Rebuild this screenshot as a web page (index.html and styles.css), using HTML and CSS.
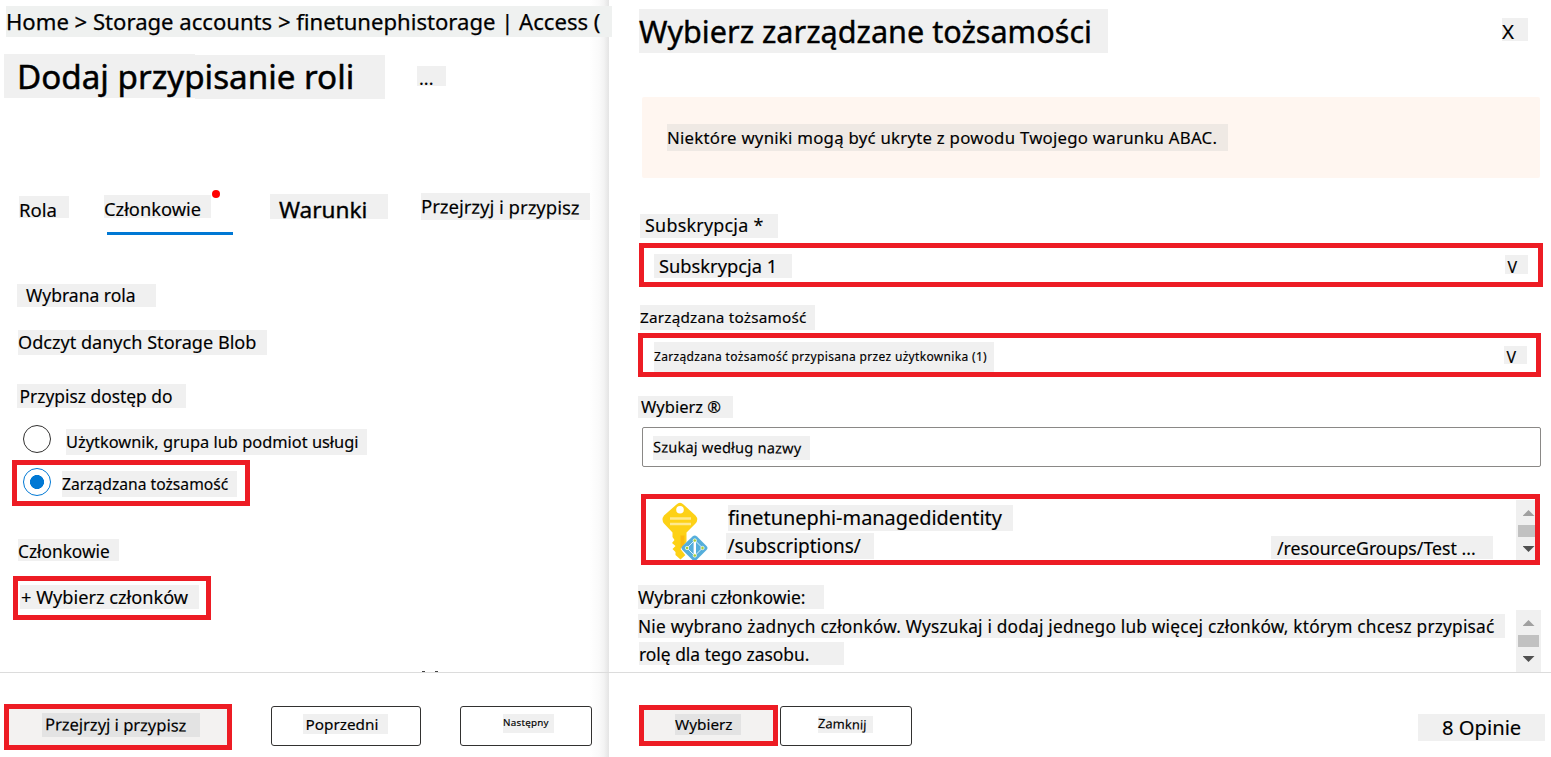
FILE: index.html
```html
<!DOCTYPE html>
<html lang="pl">
<head>
<meta charset="utf-8">
<title>Dodaj przypisanie roli</title>
<link rel="stylesheet" href="styles.css">
</head>
<body>
<div class="app">
  <section class="page">
    <div class="page-body">
      <nav class="chip breadcrumb">Home &gt; Storage accounts &gt; finetunephistorage | Access (</nav>
      <header class="title-row">
        <h1 class="chip title">Dodaj przypisanie roli</h1>
        <span class="chip more">...</span>
      </header>
      <div class="tabs">
        <span class="chip tab-role">Rola</span>
        <span class="chip tab-members">Członkowie<i class="alert-dot"></i><i class="tab-line"></i></span>
        <span class="chip tab-conditions">Warunki</span>
        <span class="chip tab-review"><span class="tilt">Przejrzyj i przypisz</span></span>
      </div>
      <div class="chip role-label">Wybrana rola</div>
      <div class="chip role-value">Odczyt danych Storage Blob</div>
      <div class="chip access-label">Przypisz dostęp do</div>
      <div class="radio-row">
        <span class="radio"></span>
        <span class="chip radio-user">Użytkownik, grupa lub podmiot usługi</span>
      </div>
      <div class="marked radio-marked">
        <span class="radio checked"></span>
        <span class="chip radio-identity">Zarządzana tożsamość</span>
      </div>
      <div class="chip members-label">Członkowie</div>
      <div class="marked add-members"><span class="chip add-text">+ Wybierz członków</span></div>
      <div class="cut-text"><i></i><i></i></div>
    </div>
    <footer class="page-footer">
      <div class="marked primary btn-review"><span class="chip dark review-text"><span class="tilt">Przejrzyj i przypisz</span></span></div>
      <div class="button btn-prev"><span class="chip prev-text">Poprzedni</span></div>
      <div class="button btn-next"><span class="chip next-text">Następny</span></div>
    </footer>
  </section>

  <section class="panel">
    <div class="panel-body">
      <header class="panel-head">
        <h2 class="chip panel-title">Wybierz zarządzane tożsamości</h2>
        <span class="chip close">X</span>
      </header>
      <div class="notice"><span class="chip notice-text">Niektóre wyniki mogą być ukryte z powodu Twojego warunku ABAC.</span></div>
      <div class="chip sub-label">Subskrypcja *</div>
      <div class="marked select sub-select"><span class="chip sub-value">Subskrypcja 1</span><span class="chip arrow">V</span></div>
      <div class="chip ident-label">Zarządzana tożsamość</div>
      <div class="marked select ident-select"><span class="chip ident-value">Zarządzana tożsamość przypisana przez użytkownika (1)</span><span class="chip arrow arrow-low">V</span></div>
      <div class="chip pick-label">Wybierz ®</div>
      <div class="search"><span class="chip search-text"><span class="tilt">Szukaj według nazwy</span></span></div>
      <div class="marked result">
        <svg class="key" width="50" height="61" viewBox="0 0 50 61">
          <path fill="#fdd116" d="M16.500 4.500Q20 1 23.500 4.500L35.500 15.500Q39 19.500 35.500 23.500L26.500 32.500V54L20.500 59.500L15.500 55V52L12.500 49L15.500 46L12 43L14.500 40L12.500 37V32.500L4 23.500Q1 19.500 4 15.500Z"/>
          <path fill="#fbb90f" d="M20.500 35.500H24.500V46L20.500 51Z"/>
          <circle cx="20" cy="9.800" r="3.800" fill="#fff"/>
          <path stroke="#ffe98f" stroke-width="2.600" d="M10 18.500h21M10 24h21"/>
          <path fill="#fff" d="M34.500 33L50 48V61H30L20.500 49Z"/>
          <path fill="#55aedb" d="M32.500 36.500Q34.800 34.500 37 36.500L46.500 46Q48.500 48 46.500 50L36 60.500H33L22.500 50Q20.500 48 22.500 46Z"/>
          <path fill="none" stroke="#d8f0fa" stroke-width="1" d="M34 41L27 48L34 55M35.500 41L42.500 48L35.500 55"/>
          <path stroke="#fff" stroke-width="2.400" d="M34.800 40V56"/>
          <g fill="#a8cf38" stroke="#fff" stroke-width=".7"><circle cx="34.800" cy="40.500" r="1.700"/><circle cx="27" cy="48" r="1.700"/><circle cx="42.500" cy="48" r="1.700"/><circle cx="34.800" cy="55.500" r="1.700"/></g>
        </svg>
        <div class="result-text">
          <div class="chip result-name">finetunephi-managedidentity</div>
          <div class="chip result-path">/subscriptions/</div>
        </div>
        <span class="chip result-group">/resourceGroups/Test ...</span>
        <div class="scrollbar result-scroll"><i class="up"></i><i class="thumb"></i><i class="down"></i></div>
      </div>
      <div class="selected">
        <div class="selected-text">
          <div class="chip selected-label">Wybrani członkowie:</div>
          <div class="chip selected-one">Nie wybrano żadnych członków. Wyszukaj i dodaj jednego lub więcej członków, którym chcesz przypisać</div>
          <div class="chip selected-two">rolę dla tego zasobu.</div>
        </div>
        <div class="scrollbar selected-scroll"><i class="up"></i><i class="thumb"></i><i class="down"></i></div>
      </div>
    </div>
    <footer class="panel-footer">
      <div class="marked primary btn-select"><span class="chip dark select-text">Wybierz</span></div>
      <div class="button btn-close"><span class="chip close-text"><span class="tilt steep">Zamknij</span></span></div>
      <div class="chip feedback">8 Opinie</div>
    </footer>
  </section>
</div>
</body>
</html>
```
FILE: styles.css
```css
* { box-sizing: border-box; }
body { margin: 0; background: #fff; color: #000; font-family: "Noto Sans", "Open Sans", sans-serif; overflow: hidden; }
h1, h2 { margin: 0; font-weight: 400; }

.app { display: grid; grid-template-columns: 609px 942px; height: 757px; }
.page { position: relative; z-index: 1; display: grid; grid-template-rows: 672px 85px; background: linear-gradient(to right, #fff 590px, #fafafa 599px, #f3f3f3 604px, #e4e4e4 609px); }
.panel { display: grid; grid-template-rows: 672px 85px; background: #fff; }
.page-body, .panel-body { display: flex; flex-direction: column; align-items: flex-start; min-width: 0; }
.page-footer, .panel-footer { display: flex; align-items: flex-start; border-top: 1px solid #dcdcdc; }

/* Shaded text label; the text may run past the shading. */
.chip { display: block; flex: none; background: #f0f0f0; white-space: nowrap; -webkit-text-stroke: .15px #000; }
.dark { background: #e3e3e3; }
.tilt { display: block; transform: rotate(.5deg); }
.steep { transform: rotate(2deg); }
.marked { flex: none; display: flex; align-items: flex-start; border: 5px solid #ed1c24; }
.primary { background: #f3f2f1; }
.button { flex: none; display: flex; align-items: flex-start; height: 40px; border: 1px solid #323130; border-radius: 3px; background: #fff; }

.breadcrumb { margin: 6px 0 0 6px; width: 606px; height: 31px; background: #eff1f0; font-size: 22.1px; line-height: 31px; -webkit-text-stroke-width: .25px; }
.title-row { display: flex; align-items: flex-start; margin: 17px 0 0 4px; height: 45px; }
.title { width: 381px; height: 45px; font-size: 33.2px; line-height: 45px; text-indent: 13px; -webkit-text-stroke-width: .5px; background: linear-gradient(#f0f0f0, #f0f0f0) 0 0 / 191px 44px no-repeat, linear-gradient(#f0f0f0, #f0f0f0) 191px 1px / 190px 44px no-repeat; }
.more { margin: 12px 0 0 32px; width: 29px; height: 20px; font-size: 18px; line-height: 24px; text-indent: 2px; }

.tabs { display: flex; align-items: flex-start; margin: 94px 0 0 19px; height: 27px; }
.tab-role { margin-top: 3px; width: 50px; height: 22px; font-size: 18.6px; line-height: 28px; }
.tab-members { position: relative; margin: 2px 0 0 35px; width: 107px; height: 23px; font-size: 18.3px; line-height: 28px; }
.alert-dot { position: absolute; left: 108px; top: -5px; width: 8px; height: 8px; border-radius: 50%; background: #f00; }
.tab-line { position: absolute; left: 3px; top: 37px; width: 126px; height: 3px; background: #0078d4; }
.tab-conditions { margin: 1px 0 0 59px; width: 118px; height: 25px; font-size: 22.6px; line-height: 31px; text-indent: 9px; -webkit-text-stroke-width: .35px; }
.tab-review { margin-left: 33px; width: 169px; height: 27px; font-size: 18.5px; line-height: 28px; }

.role-label { margin: 64px 0 0 17px; width: 139px; height: 23px; font-size: 17.5px; line-height: 22px; text-indent: 9px; }
.role-value { margin: 23px 0 0 18px; width: 249px; height: 25px; font-size: 18.1px; line-height: 24px; }
.access-label { margin: 29px 0 0 17px; width: 169px; height: 24px; font-size: 17.4px; line-height: 24px; text-indent: 2.500px; }
.radio-row { display: flex; align-items: flex-start; margin: 17px 0 0 23px; height: 35px; }
.radio { flex: none; width: 28px; height: 28px; border: 1px solid #323130; border-radius: 50%; }
.checked { border-color: #0078d4; background: radial-gradient(circle, #0078d4 6.7px, #fff 7.3px); }
.radio-user { margin: 4px 0 0 15px; width: 301px; height: 26px; font-size: 16.4px; line-height: 25px; }
.radio-marked { margin-left: 12px; width: 238px; height: 46px; padding: 3px 0 0 6px; }
.radio-identity { margin: 3px 0 0 11px; width: 175px; height: 26px; font-size: 15.65px; line-height: 26px; }
.members-label { margin: 33px 0 0 18px; width: 101px; height: 22px; font-size: 17.3px; line-height: 26px; }
.add-members { margin: 15px 0 0 13px; width: 198px; height: 44px; padding: 4px 0 0 2px; }
.add-text { width: 179px; height: 24px; font-size: 18.2px; line-height: 24px; text-indent: 1px; }
.cut-text { display: flex; gap: 10px; margin: 51px 0 0 422px; }
.cut-text i { width: 3px; height: 1px; background: #444; }

.btn-review { margin: 31px 0 0 4px; width: 228px; height: 46px; padding: 4px 0 0 33px; }
.review-text { width: 158px; height: 24px; font-size: 16.5px; line-height: 23px; text-indent: 3px; }
.btn-prev { margin: 33px 0 0 39px; width: 150px; padding: 7px 0 0 31px; }
.prev-text { width: 85px; height: 20px; font-size: 15.3px; line-height: 20px; text-indent: 2.500px; }
.btn-next { margin: 33px 0 0 39px; width: 132px; padding: 7px 0 0 42px; }
.next-text { width: 51px; height: 19px; font-size: 9.8px; line-height: 18px; letter-spacing: .25px; }

.panel-head { display: flex; align-items: flex-start; margin: 9px 0 0 30px; height: 44px; }
.panel-title { width: 469px; height: 44px; font-size: 30.6px; line-height: 45px; -webkit-text-stroke-width: .4px; }
.close { margin: 9px 0 0 394px; width: 26px; height: 23px; font-size: 20.5px; line-height: 27px; }
.notice { margin: 44px 0 0 33px; width: 898px; height: 81px; padding: 27px 0 0 25px; border-radius: 2px; background: #fff6f0; }
.notice-text { width: 561px; height: 27px; background: #efe9e4; font-size: 16.8px; letter-spacing: .25px; line-height: 27px; }
.sub-label { margin: 36px 0 0 31px; width: 138px; height: 24px; font-size: 17.9px; letter-spacing: .25px; line-height: 23px; text-indent: 5px; }
.select { justify-content: space-between; height: 44px; }
.sub-select { margin: 5px 0 0 30px; width: 904px; padding: 6px 10px 0; }
.sub-value { width: 138px; height: 24px; font-size: 18.3px; line-height: 24px; text-indent: 5px; }
.arrow { margin-top: 1px; width: 23px; height: 19px; font-size: 16px; line-height: 24px; text-indent: 2.500px; }
.ident-label { margin: 18px 0 0 31px; width: 175px; height: 25px; font-size: 15.3px; letter-spacing: .2px; line-height: 25px; }
.ident-select { margin: 3px 0 0 29px; width: 903px; padding: 4px 9px 0 11px; }
.ident-value { width: 340px; height: 30px; font-size: 12px; letter-spacing: .33px; line-height: 29px; }
.arrow-low { margin-top: 4px; height: 18px; line-height: 22px; }
.pick-label { margin: 19px 0 0 29px; width: 95px; height: 22px; font-size: 16.5px; line-height: 22px; text-indent: 3px; }
.search { margin: 9px 0 0 33px; width: 899px; height: 40px; padding: 8px 0 0 10px; border: 1px solid #8a8886; border-radius: 2px; }
.search-text { width: 157px; height: 24px; font-size: 14.6px; letter-spacing: .2px; line-height: 22px; }
.result { margin: 27px 0 0 32px; width: 899px; height: 71px; overflow: hidden; }
.key { flex: none; margin: 1px 0 0 14px; }
.result-text { margin: 6px 0 0 16px; width: 287px; }
.result-name { margin-left: 2px; width: 285px; height: 26px; font-size: 19.9px; line-height: 26px; }
.result-path { margin-top: 2px; width: 148px; height: 26px; font-size: 19px; line-height: 27px; text-indent: 1.500px; }
.result-group { margin: 37px 0 0 258px; width: 222px; height: 23px; font-size: 17.7px; line-height: 24px; text-indent: 6px; }

.scrollbar { flex: none; display: flex; flex-direction: column; align-items: center; width: 25px; background: #f0f0f0; }
.result-scroll { margin: 1px 0 0 23px; height: 60px; padding-top: 10px; }
.up, .down { width: 12px; height: 6px; }
.up { background: #a0a0a0; clip-path: polygon(50% 0, 100% 100%, 0 100%); }
.down { background: #505050; clip-path: polygon(0 0, 100% 0, 50% 100%); }
.thumb { margin: 9px 0; width: 21px; height: 12px; background: #c1c1c1; }

.selected { display: flex; align-items: flex-start; margin: 20px 0 0 29px; height: 87px; }
.selected-text { width: 867px; }
.selected-label { width: 186px; height: 24px; font-size: 17.5px; line-height: 24px; }
.selected-one { margin-top: 5px; width: 867px; height: 24px; font-size: 17.3px; letter-spacing: .2px; line-height: 25px; }
.selected-two { margin: 4px 0 0 1px; width: 205px; height: 23px; font-size: 17.4px; line-height: 24px; }
.selected-scroll { margin: 25px 0 0 11px; height: 62px; padding-top: 10px; }

.btn-select { margin: 32px 0 0 30px; width: 139px; height: 41px; padding: 4px 0 0 31px; }
.select-text { width: 66px; height: 21px; font-size: 15.3px; line-height: 21px; }
.btn-close { margin: 33px 0 0 2px; width: 132px; padding: 9px 0 0 37px; }
.close-text { width: 55px; height: 17px; font-size: 13px; line-height: 16px; }
.feedback { margin: 41px 0 0 506px; width: 127px; height: 27px; font-size: 20.2px; line-height: 27px; text-indent: 24px; }
```
